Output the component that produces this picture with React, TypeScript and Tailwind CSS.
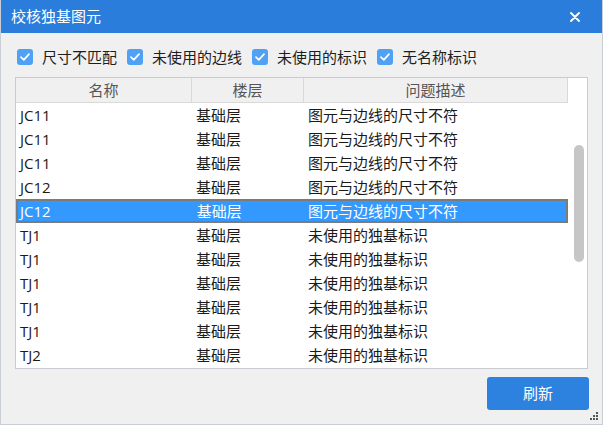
import React from "react";

type Row = { name: string; floor: string; desc: string; selected?: boolean };

const rows: Row[] = [
  { name: "JC11", floor: "基础层", desc: "图元与边线的尺寸不符" },
  { name: "JC11", floor: "基础层", desc: "图元与边线的尺寸不符" },
  { name: "JC11", floor: "基础层", desc: "图元与边线的尺寸不符" },
  { name: "JC12", floor: "基础层", desc: "图元与边线的尺寸不符" },
  { name: "JC12", floor: "基础层", desc: "图元与边线的尺寸不符", selected: true },
  { name: "TJ1", floor: "基础层", desc: "未使用的独基标识" },
  { name: "TJ1", floor: "基础层", desc: "未使用的独基标识" },
  { name: "TJ1", floor: "基础层", desc: "未使用的独基标识" },
  { name: "TJ1", floor: "基础层", desc: "未使用的独基标识" },
  { name: "TJ1", floor: "基础层", desc: "未使用的独基标识" },
  { name: "TJ2", floor: "基础层", desc: "未使用的独基标识" },
];

const filters = ["尺寸不匹配", "未使用的边线", "未使用的标识", "无名称标识"];

const font = "font-['Open_Sans','Noto_Sans_CJK_SC',sans-serif]";

function CheckBox() {
  return (
    <span className="grid h-[16px] w-[16px] place-items-center rounded-[3px] bg-[#50a0f4]">
      <svg width="10" height="8" viewBox="0 0 10 8" fill="none">
        <path d="M1 4.2 3.8 6.8 9 1.2" stroke="#fff" strokeWidth="1.7" strokeLinecap="round" strokeLinejoin="round" />
      </svg>
    </span>
  );
}

export default function App() {
  return (
    <div className={`relative flex h-[425px] w-[603px] flex-col border-x border-b border-[#c9ced6] bg-[#f0f0f0] ${font}`}>
      {/* title bar */}
      <div className="flex h-[33px] shrink-0 items-center justify-between bg-[#2b7ddb] pl-[10px] pr-[22px] text-[15px] text-white">
        <span>校核独基图元</span>
        <svg width="10" height="10" viewBox="0 0 10 10">
          <path d="M1 1 9 9M9 1 1 9" stroke="#fff" strokeWidth="1.8" strokeLinecap="round" />
        </svg>
      </div>

      {/* filters */}
      <div className="mt-[16px] flex h-[16px] items-center pl-[16px] text-[15px] text-[#1e1e1e]">
        {filters.map((f) => (
          <label key={f} className="mr-[10px] flex items-center gap-[9px]">
            <CheckBox />
            <span className="leading-none">{f}</span>
          </label>
        ))}
      </div>

      {/* table */}
      <div className="ml-[14px] mt-[12px] flex h-[292px] w-[573px] border border-[#c8ccd2] bg-white text-[15px]">
        <div className="flex w-[552px] flex-col">
          <div className="flex h-[25px] shrink-0 border-b border-[#d9d9d9] bg-[#f0f0f0] text-[#555]">
            <div className="flex w-[176px] items-center justify-center border-r border-[#d9d9d9]">名称</div>
            <div className="flex w-[112px] items-center justify-center border-r border-[#d9d9d9]">楼层</div>
            <div className="flex w-[264px] items-center justify-center border-r border-[#d9d9d9]">问题描述</div>
          </div>
          {rows.map((r, i) => (
            <div
              key={i}
              className={`flex h-[24px] shrink-0 items-center ${
                r.selected ? "border-2 border-[#7b7b7b] bg-[#3399ff] text-white" : "text-[#1a1a1a]"
              }`}
            >
              <div className={`w-[176px] ${r.selected ? "pl-[2px]" : "pl-[4px]"}`}>{r.name}</div>
              <div className="w-[112px] pl-[4px]">{r.floor}</div>
              <div className="w-[264px] pl-[4px]">{r.desc}</div>
            </div>
          ))}
        </div>
        <div className="flex w-[19px] flex-col bg-white pt-[67px]">
          <div className="ml-[6px] h-[117px] w-[10px] rounded-full bg-[#c6c6c6]" />
        </div>
      </div>

      {/* footer */}
      <div className="mt-[8px] flex justify-end pr-[13px]">
        <button className="h-[33px] w-[102px] rounded-[3px] bg-[#2d82e0] text-[15px] text-white">刷新</button>
      </div>

      {/* resize grip */}
      <svg className="absolute bottom-[3px] right-[3px]" width="9" height="9" viewBox="0 0 9 9">
        <rect x="6" y="0" width="2" height="2" fill="#555" />
        <rect x="3" y="3" width="2" height="2" fill="#555" />
        <rect x="6" y="3" width="2" height="2" fill="#555" />
        <rect x="0" y="6" width="2" height="2" fill="#555" />
        <rect x="3" y="6" width="2" height="2" fill="#555" />
        <rect x="6" y="6" width="2" height="2" fill="#555" />
      </svg>
    </div>
  );
}
